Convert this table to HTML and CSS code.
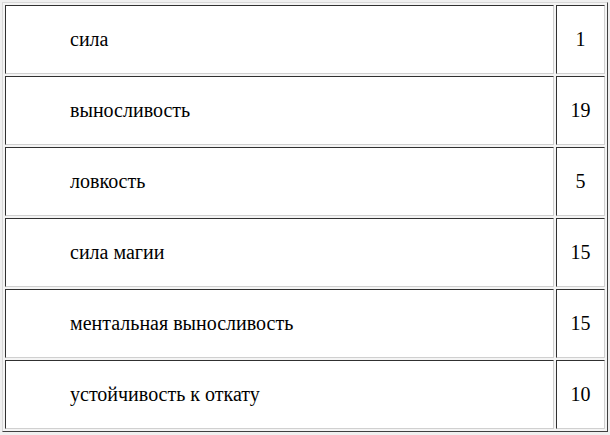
FILE: index.html
```html
<!DOCTYPE html>
<html>
<head>
<meta charset="utf-8">
<link rel="stylesheet" href="styles.css">
</head>
<body>
<table class="stats">
  <tr><td class="name">сила</td><td class="val">1</td></tr>
  <tr><td class="name">выносливость</td><td class="val">19</td></tr>
  <tr><td class="name">ловкость</td><td class="val">5</td></tr>
  <tr><td class="name">сила магии</td><td class="val">15</td></tr>
  <tr><td class="name">ментальная выносливость</td><td class="val">15</td></tr>
  <tr><td class="name">устойчивость к откату</td><td class="val">10</td></tr>
</table>
</body>
</html>
```
FILE: styles.css
```css
html, body {
  margin: 0;
  padding: 0;
  background: #f0f0f0;
}
body {
  padding: 2px 0 0 2px;
  font-family: "Liberation Serif", "Times New Roman", serif;
  font-size: 20px;
  color: #000;
}
.stats {
  width: 606px;
  border-collapse: separate;
  border-spacing: 2px;
  border: 1px solid;
  border-color: #d8d8d8 #404040 #404040 #d8d8d8;
  background: #f4f4f4;
}
.stats td {
  height: 67px;
  padding: 0;
  border: 1px solid;
  border-color: #303030 #d0d0d0 #d0d0d0 #303030;
  background: #fff;
  vertical-align: middle;
}
.stats .name {
  width: 549px;
  padding-left: 64px;
  box-sizing: border-box;
}
.stats .val {
  text-align: center;
}
```
